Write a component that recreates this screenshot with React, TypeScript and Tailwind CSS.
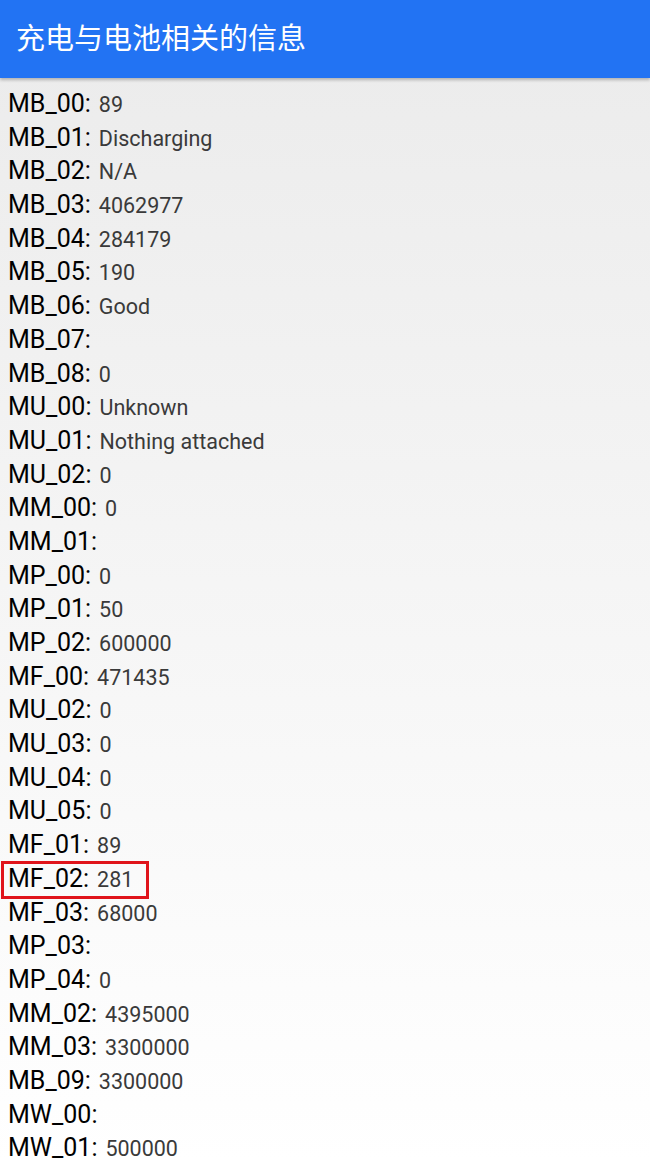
const rows: [string, string][] = [
  ['MB_00', '89'],
  ['MB_01', 'Discharging'],
  ['MB_02', 'N/A'],
  ['MB_03', '4062977'],
  ['MB_04', '284179'],
  ['MB_05', '190'],
  ['MB_06', 'Good'],
  ['MB_07', ''],
  ['MB_08', '0'],
  ['MU_00', 'Unknown'],
  ['MU_01', 'Nothing attached'],
  ['MU_02', '0'],
  ['MM_00', '0'],
  ['MM_01', ''],
  ['MP_00', '0'],
  ['MP_01', '50'],
  ['MP_02', '600000'],
  ['MF_00', '471435'],
  ['MU_02', '0'],
  ['MU_03', '0'],
  ['MU_04', '0'],
  ['MU_05', '0'],
  ['MF_01', '89'],
  ['MF_02', '281'],
  ['MF_03', '68000'],
  ['MP_03', ''],
  ['MP_04', '0'],
  ['MM_02', '4395000'],
  ['MM_03', '3300000'],
  ['MB_09', '3300000'],
  ['MW_00', ''],
  ['MW_01', '500000'],
];

export default function App() {
  return (
    <div className="h-[1161px] w-[650px] overflow-hidden bg-gradient-to-b from-[#ebebeb] to-white font-['Roboto','Noto_Sans_CJK_SC',sans-serif]">
      <header className="relative h-[78px] bg-[#2273f3] px-4 shadow-[0_2px_3px_rgba(0,0,0,0.25)]">
        <h1 className="pt-[14px] text-[29px] leading-[44px] text-white font-['Noto_Sans_CJK_SC',sans-serif]">
          充电与电池相关的信息
        </h1>
      </header>
      <ul className="pl-2 pt-[9px]">
        {rows.map(([key, value], i) => (
          <li key={i} className="relative h-[33.7px] leading-[33.7px] whitespace-nowrap">
            <span className="text-[25px] text-black">{key}:</span>
            <span className="ml-[8px] text-[21.5px] text-[#3a3a3a]">{value}</span>
            {key === 'MF_02' && (
              <div className="absolute left-[-7px] top-[-1px] h-[38px] w-[148px] border-[3px] border-[#e0141b]" />
            )}
          </li>
        ))}
      </ul>
    </div>
  );
}
